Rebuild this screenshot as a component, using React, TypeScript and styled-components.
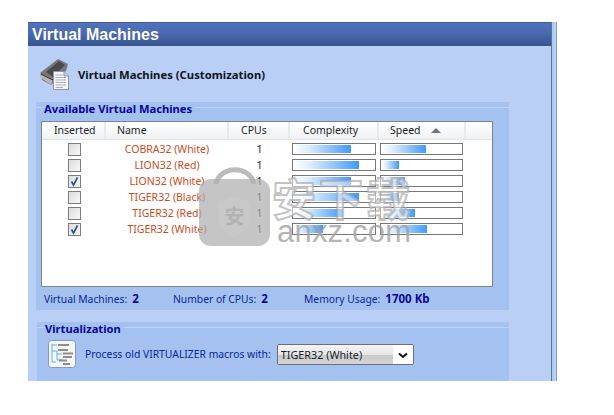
import React from "react";
import styled, { createGlobalStyle } from "styled-components";

const Global = createGlobalStyle`
  html, body { margin: 0; padding: 0; background: #fff; }
  body { width: 614px; height: 415px; overflow: hidden; position: relative; font-family: "Noto Sans", "DejaVu Sans", sans-serif; }
`;

const Frame = styled.div`
  display: flex;
  margin: 22px 0 0 28px;
  height: 359px;
  width: 529px;
`;
const Pane = styled.main`
  width: 524px;
  background: #b9cff5;
  display: flex;
  flex-direction: column;
  border-right: 1px solid #5f7596;
  box-sizing: content-box;
`;
const Edge = styled.div`
  width: 4px;
  background: linear-gradient(90deg, #a5cbee, #bcd4f6);
  border-right: 1px solid #8a9cc0;
`;
const TitleBar = styled.h1`
  margin: 0;
  height: 24px;
  padding-left: 4px;
  font: bold 16px/24px "Liberation Sans", Arial, sans-serif;
  color: #fff;
  border-top: 1px solid #3d5a9a;
  box-sizing: border-box;
  background: linear-gradient(180deg, #5173bd 0%, #4a6ab0 45%, #38538e 100%);
`;
const Heading = styled.div`
  height: 56px;
  display: flex;
  align-items: center;
  gap: 7px;
  padding-left: 11px;
  font-size: 11.3px;
  font-weight: 700;
  color: #10131c;
`;
const Group = styled.section<{ $h: number; $mt: number; $ml: number; $w: number }>`
  position: relative;
  height: ${(p) => p.$h}px;
  margin-top: ${(p) => p.$mt}px;
  margin-left: ${(p) => p.$ml}px;
  width: ${(p) => p.$w}px;
  background: #a5c1ef;
  display: flex;
  flex-direction: column;
`;
const Legend = styled.div<{ $pl?: number }>`
  height: 19px;
  box-sizing: border-box;
  padding-left: ${(p) => p.$pl ?? 8}px;
  display: flex;
  align-items: flex-start;
  font-size: 11.2px;
  line-height: 14px;
  font-weight: 700;
  color: #07079a;
  background: linear-gradient(#a5c1ef 5px, #bdd3f7 5px, #bdd3f7 6px, transparent 6px);
`;
const LegendText = styled.span`
  background: #a5c1ef;
  padding: 0 3px 0 0;
  height: 14px;
`;
const Table = styled.div`
  margin-left: 5px;
  width: 452px;
  height: 166px;
  box-sizing: border-box;
  border: 1px solid #7b8290;
  background: #fff;
`;
const HeaderRow = styled.div`
  display: grid;
  grid-template-columns: 64px 123px 61px 89px 87px 1fr;
  height: 18px;
  background: linear-gradient(#ffffff, #f0f1f3);
  border-bottom: 1px solid #e3e4e6;
  box-sizing: border-box;
  font-size: 10.5px;
  line-height: 17px;
  color: #1b1f2a;
`;
const HeaderCell = styled.div<{ $pl: number }>`
  padding-left: ${(p) => p.$pl}px;
  border-right: 2px solid #e8e9eb;
  display: flex;
  align-items: center;
  gap: 10px;
  white-space: nowrap;
  &:last-child { border-right: 0; }
`;
const SortArrow = styled.i`
  width: 0;
  height: 0;
  border-left: 5px solid transparent;
  border-right: 5px solid transparent;
  border-bottom: 5px solid #70757f;
`;
const Rows = styled.div`
  padding-top: 1px;
`;
const Row = styled.div`
  display: grid;
  grid-template-columns: 64px 123px 61px 88px 87px;
  height: 16px;
  align-items: center;
  font-size: 10.5px;
`;
const CheckCell = styled.div`
  display: flex;
  justify-content: center;
  padding-left: 1px;
`;
const Check = styled.span`
  width: 13px;
  height: 13px;
  box-sizing: border-box;
  border: 1px solid #7b7e84;
  background: linear-gradient(135deg, #dcdcd8, #f8f8f6);
  display: flex;
  align-items: center;
  justify-content: center;
`;
const NameCell = styled.div`
  text-align: center;
  color: #cc4b1c;
  padding-right: 1px;
`;
const CpuCell = styled.div`
  text-align: center;
  color: #171b26;
`;
const Meter = styled.div<{ $w: number }>`
  width: ${(p) => p.$w}px;
  height: 12px;
  box-sizing: border-box;
  border: 1px solid #777;
  margin-left: 2px;
  background: #fff;
  padding: 1px 0 1px 1px;
`;
const MeterFill = styled.div`
  height: 100%;
  background: linear-gradient(90deg, #fff 0%, #dcedff 25%, #a9d2ff 50%, #75b4ff 75%, #4199ff 100%);
`;
const Footer = styled.div`
  flex: 1;
  display: flex;
  align-items: center;
  padding-left: 8px;
  font-size: 10.3px;
  color: #07279a;
`;
const Stat = styled.span<{ $w: number }>`
  width: ${(p) => p.$w}px;
  white-space: nowrap;
`;
const StatValue = styled.b`
  margin-left: 5px;
  font-size: 11.5px;
  color: #07079a;
`;
const VirtRow = styled.div`
  display: flex;
  align-items: center;
  padding-left: 11px;
  margin-top: -1px;
  font-size: 10.35px;
  color: #07279a;
`;
const VirtLabel = styled.span`
  margin-left: 9px;
  margin-right: 6px;
  white-space: nowrap;
`;
const SelectWrap = styled.div`
  position: relative;
  width: 137px;
  height: 21px;
  box-sizing: border-box;
  border: 1px solid #6c6f75;
  border-radius: 2px;
  background: #fff;
  overflow: hidden;
`;
const Select = styled.select`
  appearance: none;
  border: 0;
  outline: 0;
  width: 100%;
  height: 100%;
  padding: 0 0 0 3px;
  font: 10.8px "Noto Sans", sans-serif;
  color: #1a1d29;
  background: linear-gradient(#f4f4f4, #e6e6e6 50%, #c9c9c9 52%, #d4d4d4) 0 0 / 115px 100% no-repeat #fff;
`;
const Chevron = styled.svg`
  position: absolute;
  right: 5px;
  top: 7px;
  pointer-events: none;
`;
const Watermark = styled.div`
  position: absolute;
  left: 198px;
  top: 166px;
  width: 220px;
  height: 84px;
  pointer-events: none;
`;
const WatermarkSvg = styled.svg`
  position: absolute;
  left: 0;
  top: 0;
`;
const BrandCn = styled.span`
  position: absolute;
  left: 74px;
  top: 5px;
  font: 700 44px/52px "Noto Sans CJK SC", sans-serif;
  white-space: nowrap;
  color: rgba(255, 255, 255, 0.5);
  -webkit-text-stroke: 2px rgba(170, 170, 170, 0.7);
  letter-spacing: 3px;
`;
const BrandEn = styled.span`
  position: absolute;
  left: 79px;
  top: 48px;
  font: 400 31px/36px "Liberation Sans", sans-serif;
  color: rgba(160, 160, 160, 0.8);
  letter-spacing: 0.2px;
`;

const machines = [
  { name: "COBRA32 (White)", on: false, c: 57, s: 44 },
  { name: "LION32 (Red)", on: false, c: 65, s: 17 },
  { name: "LION32 (White)", on: true, c: 57, s: 23 },
  { name: "TIGER32 (Black)", on: false, c: 65, s: 17 },
  { name: "TIGER32 (Red)", on: false, c: 49, s: 33 },
  { name: "TIGER32 (White)", on: true, c: 29, s: 45 },
];

const DriveIcon = () => (
  <svg width="32" height="32" viewBox="0 0 32 32">
    <path d="M1 15 L19 1 L29 6 L27 13 L12 27 L3 22 Z" fill="#77777a" />
    <path d="M1 15 L2 20 L12 27 L14 21 Z" fill="#b5b5b8" />
    <path d="M7 14 L20 3 L26 7 L14 19 Z" fill="#4a4a4c" />
    <path d="M2 16 L14 22" stroke="#4a3328" strokeWidth="1.2" />
    <path d="M14.500 13.500 H25 L29.500 18 V31.500 H14.500 Z" fill="#f4f6fa" stroke="#8d97a8" />
    <path d="M25 13.500 V18 H29.500" fill="#c7d3e6" stroke="#8d97a8" />
    <path d="M16.500 17 H24 M16.500 19.500 H27 M16.500 22 H27 M16.500 24.500 H27 M16.500 27 H27 M16.500 29.500 H24" stroke="#a9adb4" />
  </svg>
);

const TreeIcon = () => (
  <svg width="28" height="28" viewBox="0 0 28 28">
    <rect x="0.500" y="0.500" width="27" height="27" rx="3" fill="#f4f7fc" stroke="#8d94c4" />
    <path d="M4 4 V22 M4 5 H9 M4 11 H9 M9 11 V20 M9 14 H14 M9 20 H14 M4 22 H8" stroke="#5cb0ea" fill="none" />
    <path d="M10 5 H21 M10 10 H20 M15 13.500 H25 M15 17 H24 M11 20.500 H19 M15 24 H22" stroke="#8b8e8a" strokeWidth="2" />
  </svg>
);

const Tick = () => (
  <svg width="11" height="11" viewBox="0 0 11 11">
    <path d="M2.500 5.500 L4.500 9 L8.500 1.500" fill="none" stroke="#2a4aa0" strokeWidth="1.600" />
  </svg>
);

export default function App() {
  return (
    <>
      <Global />
      <Frame>
        <Pane>
          <TitleBar>Virtual Machines</TitleBar>
          <Heading>
            <DriveIcon />
            <span>Virtual Machines (Customization)</span>
          </Heading>
          <Group $h={208} $mt={0} $ml={8} $w={473}>
            <Legend>
              <LegendText>Available Virtual Machines</LegendText>
            </Legend>
            <Table>
              <HeaderRow>
                <HeaderCell $pl={12}>Inserted</HeaderCell>
                <HeaderCell $pl={11}>Name</HeaderCell>
                <HeaderCell $pl={12}>CPUs</HeaderCell>
                <HeaderCell $pl={13}>Complexity</HeaderCell>
                <HeaderCell $pl={11}>
                  Speed<SortArrow />
                </HeaderCell>
                <HeaderCell $pl={0} />
              </HeaderRow>
              <Rows>
                {machines.map((m) => (
                  <Row key={m.name}>
                    <CheckCell>
                      <Check>{m.on && <Tick />}</Check>
                    </CheckCell>
                    <NameCell>{m.name}</NameCell>
                    <CpuCell>1</CpuCell>
                    <Meter $w={84}>
                      <MeterFill style={{ width: m.c }} />
                    </Meter>
                    <Meter $w={83}>
                      <MeterFill style={{ width: m.s }} />
                    </Meter>
                  </Row>
                ))}
              </Rows>
            </Table>
            <Footer>
              <Stat $w={129}>
                Virtual Machines:<StatValue>2</StatValue>
              </Stat>
              <Stat $w={131}>
                Number of CPUs:<StatValue>2</StatValue>
              </Stat>
              <Stat $w={160}>
                Memory Usage:<StatValue>1700 Kb</StatValue>
              </Stat>
            </Footer>
          </Group>
          <Group $h={59} $mt={12} $ml={9} $w={472}>
            <Legend $pl={8}>
              <LegendText>Virtualization</LegendText>
            </Legend>
            <VirtRow>
              <TreeIcon />
              <VirtLabel>Process old VIRTUALIZER macros with:</VirtLabel>
              <SelectWrap>
                <Select defaultValue="TIGER32 (White)" aria-label="Virtual machine">
                  {machines.map((m) => (
                    <option key={m.name}>{m.name}</option>
                  ))}
                </Select>
                <Chevron width="10" height="7" viewBox="0 0 10 7">
                  <path d="M1 1.500 L5 5 L9 1.500" fill="none" stroke="#111" strokeWidth="2" />
                </Chevron>
              </SelectWrap>
            </VirtRow>
          </Group>
        </Pane>
        <Edge />
      </Frame>
      <Watermark>
        <WatermarkSvg width="74" height="82" viewBox="0 0 74 82">
          <path d="M18 18 C22 -1 52 -1 56 18" fill="none" stroke="rgba(175,175,175,0.85)" strokeWidth="5" />
          <rect x="1" y="13" width="71" height="67" rx="12" fill="rgba(175,175,175,0.72)" />
          <path d="M21 36 L36.500 30 L52 36 V54 C52 62 44 68 36.500 71 C29 68 21 62 21 54 Z" fill="rgba(200,200,200,0.8)" />
          <text x="36.500" y="58" textAnchor="middle" fontSize="20" fontWeight="700" fill="rgba(175,175,175,0.9)" fontFamily="Noto Sans CJK SC, sans-serif">安</text>
        </WatermarkSvg>
        <BrandCn>安下载</BrandCn>
        <BrandEn>anxz.com</BrandEn>
      </Watermark>
    </>
  );
}
